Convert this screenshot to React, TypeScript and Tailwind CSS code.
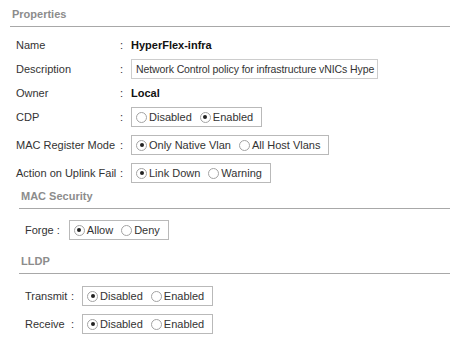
import React from "react";

type Option = { label: string; checked?: boolean };

const Radio = ({ checked }: { checked?: boolean }) => (
  <span className="w-[11px] h-[11px] rounded-full border border-[#a3a3a3] bg-white flex items-center justify-center shrink-0">
    {checked && <span className="w-[4px] h-[4px] rounded-full bg-[#222]"></span>}
  </span>
);

const RadioGroup = ({ options }: { options: Option[] }) => (
  <div className="h-[20px] border border-[#b9b9b9] bg-white flex items-center pl-[4px]">
    {options.map((o) => (
      <div key={o.label} className="flex items-center mr-[8px]">
        <Radio checked={o.checked} />
        <span className="ml-[2px] text-[#333]">{o.label}</span>
      </div>
    ))}
  </div>
);

const SectionHeader = ({ title }: { title: string }) => (
  <div className="h-[20px] border-b border-[#a8a8a8] pl-[2px]">
    <span className="block leading-[14px] font-bold text-[#8c8c8c]">{title}</span>
  </div>
);

const Row = ({ label, children, tall }: { label: string; children: React.ReactNode; tall?: boolean }) => (
  <div className={`flex items-center pl-[6px] ${tall ? "h-[28px]" : "h-[24px]"}`}>
    <span className="w-[104px] text-[#333] whitespace-nowrap">{label}</span>
    <span className="w-[11px] text-[#333]">:</span>
    {children}
  </div>
);

export default function App() {
  return (
    <div
      className="w-[450px] h-[354px] bg-white overflow-hidden pt-[7px] pl-[10px] text-[11px] leading-[14px]"
      style={{ fontFamily: '"Liberation Sans", Arial, Helvetica, sans-serif' }}
    >
      <SectionHeader title="Properties" />

      <div className="mt-[6px] flex flex-col">
        <Row label="Name">
          <span className="font-bold text-[#111]">HyperFlex-infra</span>
        </Row>
        <Row label="Description">
          <div className="w-[247px] h-[20px] border border-[#cdcdcd] bg-white flex items-center px-[4px] overflow-hidden whitespace-nowrap text-[10.5px] tracking-[-0.1px] text-[#333]">
            Network Control policy for infrastructure vNICs Hype
          </div>
        </Row>
        <Row label="Owner">
          <span className="font-bold text-[#111]">Local</span>
        </Row>
        <Row label="CDP">
          <RadioGroup options={[{ label: "Disabled" }, { label: "Enabled", checked: true }]} />
        </Row>
        <div className="mt-[2px]">
          <Row label="MAC Register Mode" tall>
            <RadioGroup options={[{ label: "Only Native Vlan", checked: true }, { label: "All Host Vlans" }]} />
          </Row>
        </div>
        <Row label="Action on Uplink Fail" tall>
          <RadioGroup options={[{ label: "Link Down", checked: true }, { label: "Warning" }]} />
        </Row>
      </div>

      {/* MAC Security */}
      <div className="ml-[9px] mt-[2px]">
        <SectionHeader title="MAC Security" />
        <div className="mt-[9px] h-[24px] flex items-center pl-[6px]">
          <span className="text-[#333]">Forge :</span>
          <div className="ml-[9px]">
            <RadioGroup options={[{ label: "Allow", checked: true }, { label: "Deny" }]} />
          </div>
        </div>

        {/* LLDP */}
        <div className="mt-[12px]">
          <SectionHeader title="LLDP" />
        </div>
        <div className="mt-[8px] flex flex-col">
          <div className="h-[28px] flex items-center pl-[6px]">
            <span className="w-[46px] text-[#333]">Transmit</span>
            <span className="w-[11px] text-[#333]">:</span>
            <RadioGroup options={[{ label: "Disabled", checked: true }, { label: "Enabled" }]} />
          </div>
          <div className="h-[28px] flex items-center pl-[6px]">
            <span className="w-[46px] text-[#333]">Receive</span>
            <span className="w-[11px] text-[#333]">:</span>
            <RadioGroup options={[{ label: "Disabled", checked: true }, { label: "Enabled" }]} />
          </div>
        </div>
      </div>
    </div>
  );
}
